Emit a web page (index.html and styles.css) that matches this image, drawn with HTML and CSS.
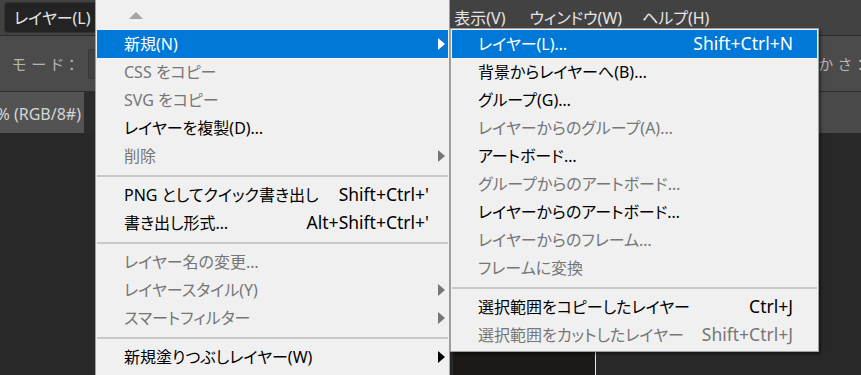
FILE: index.html
```html
<!DOCTYPE html>
<html lang="ja">
<head>
    <meta charset="UTF-8">
    <title>レイヤーメニュー</title>
    <link rel="stylesheet" href="styles.css">
</head>
<body>
<div class="app">
    <div class="menubar">
        <span class="mb-item active">レイヤー(L)</span>
        <span class="mb-item">書式(Y)</span>
        <span class="mb-item">選択範囲(S)</span>
        <span class="mb-item">フィルター(T)</span>
        <span class="mb-item">3D(D)</span>
        <span class="mb-item">表示(V)</span>
        <span class="mb-item">ウィンドウ(W)</span>
        <span class="mb-item">ヘルプ(H)</span>
    </div>
    <div class="optionsbar">
        <span class="opt-label">モード：</span>
        <div class="opt-select"></div>
        <span class="opt-label opt-right">滑らかさ：</span>
    </div>
    <div class="tabbar">
        <div class="doc-tab"><span>名称未設定-1 @ 66.7% (RGB/8#)</span></div>
    </div>
    <div class="canvas">
        <div class="photo"></div>
    </div>
</div>

<div class="menu main-menu">
    <div class="scroll-up"><span class="tri-up"></span></div>
    <div class="row hl"><span class="label">新規(N)</span><span class="key"></span><span class="arrow"></span></div>
    <div class="row off"><span class="label">CSS をコピー</span><span class="key"></span><span></span></div>
    <div class="row off"><span class="label">SVG をコピー</span><span class="key"></span><span></span></div>
    <div class="row"><span class="label">レイヤーを複製(D)…</span><span class="key"></span><span></span></div>
    <div class="row off"><span class="label">削除</span><span class="key"></span><span class="arrow"></span></div>
    <div class="sep"></div>
    <div class="row"><span class="label">PNG としてクイック書き出し</span><span class="key">Shift+Ctrl+'</span><span></span></div>
    <div class="row"><span class="label">書き出し形式…</span><span class="key">Alt+Shift+Ctrl+'</span><span></span></div>
    <div class="sep"></div>
    <div class="row off"><span class="label">レイヤー名の変更…</span><span class="key"></span><span></span></div>
    <div class="row off"><span class="label">レイヤースタイル(Y)</span><span class="key"></span><span class="arrow"></span></div>
    <div class="row off"><span class="label">スマートフィルター</span><span class="key"></span><span class="arrow"></span></div>
    <div class="sep"></div>
    <div class="row"><span class="label">新規塗りつぶしレイヤー(W)</span><span class="key"></span><span class="arrow"></span></div>
</div>

<div class="menu sub-menu">
    <div class="row hl"><span class="label">レイヤー(L)…</span><span class="key">Shift+Ctrl+N</span></div>
    <div class="row"><span class="label">背景からレイヤーへ(B)…</span><span class="key"></span></div>
    <div class="row"><span class="label">グループ(G)…</span><span class="key"></span></div>
    <div class="row off"><span class="label">レイヤーからのグループ(A)…</span><span class="key"></span></div>
    <div class="row"><span class="label">アートボード…</span><span class="key"></span></div>
    <div class="row off"><span class="label">グループからのアートボード…</span><span class="key"></span></div>
    <div class="row"><span class="label">レイヤーからのアートボード…</span><span class="key"></span></div>
    <div class="row off"><span class="label">レイヤーからのフレーム…</span><span class="key"></span></div>
    <div class="row off"><span class="label">フレームに変換</span><span class="key"></span></div>
    <div class="sep"></div>
    <div class="row"><span class="label">選択範囲をコピーしたレイヤー</span><span class="key">Ctrl+J</span></div>
    <div class="row off"><span class="label">選択範囲をカットしたレイヤー</span><span class="key">Shift+Ctrl+J</span></div>
</div>
</body>
</html>
```

FILE: styles.css
```css
* {
    margin: 0;
    padding: 0;
    box-sizing: border-box;
}
body {
    width: 861px;
    height: 375px;
    overflow: hidden;
    background: #282828;
    font-family: "Noto Sans", "Noto Sans CJK JP", sans-serif;
    font-feature-settings: "palt";
}
.app {
    display: flex;
    flex-direction: column;
    height: 375px;
}

/* top menu bar */
.menubar {
    height: 36px;
    background: #424242;
    border-bottom: 1px solid #2c2c2c;
    display: flex;
    align-items: center;
    padding-left: 4px;
    gap: 2px;
    color: #e6e6e6;
    font-size: 16px;
}
.mb-item {
    padding: 2px 9px 3px;
    border-radius: 4px;
    white-space: nowrap;
}
.mb-item.active {
    padding: 2px 7px 3px 9px;
    background: #232323;
    border: 1px solid #333;
}
.mb-item:nth-child(6) {
    margin-left: 1px;
}
.mb-item:nth-child(7) {
    margin-left: 4px;
}

/* options bar */
.optionsbar {
    height: 56px;
    background: #4b4b4b;
    border-bottom: 1px solid #2e2e2e;
    display: flex;
    align-items: center;
    padding-left: 12px;
    color: #b4b4b4;
    font-size: 15px;
    letter-spacing: 5px;
    white-space: nowrap;
}
.opt-select {
    width: 180px;
    height: 30px;
    margin-left: 8px;
    background: #424242;
    border: 1px solid #363636;
    border-radius: 3px;
}
.opt-right {
    margin-left: auto;
    margin-right: -8px;
    letter-spacing: 5px;
}

/* document tab bar */
.tabbar {
    height: 41px;
    background: #4a4a4a;
    display: flex;
}
.doc-tab {
    width: 84px;
    background: #535353;
    color: #d6d6d6;
    font-size: 16px;
    display: flex;
    align-items: center;
    justify-content: flex-end;
    overflow: hidden;
    white-space: nowrap;
    border-right: 11px solid #2b2b2b;
    box-sizing: content-box;
}
.doc-tab span {
    padding-right: 3px;
}

/* canvas */
.canvas {
    flex: 1;
    background: #282828;
    display: flex;
    padding-left: 453px;
}
.photo {
    width: 143px;
    background: #1c1917;
    border-right: 1px solid #e8e8e8;
}

/* menus */
.menu {
    position: absolute;
    background: #f0f0f0;
    border: 1px solid #a0a0a0;
    padding: 1px;
    font-size: 16px;
    color: #000;
}
.main-menu {
    left: 95px;
    top: -3px;
    width: 355px;
    height: 400px;
    padding-top: 2px;
}
.sub-menu {
    left: 450px;
    top: 28px;
    width: 369px;
    padding-bottom: 2px;
    box-shadow: 2px 2px 3px rgba(0, 0, 0, 0.45);
}
.scroll-up {
    height: 30px;
    padding-left: 32px;
    display: flex;
    align-items: center;
}
.tri-up {
    width: 0;
    height: 0;
    border-left: 7px solid transparent;
    border-right: 7px solid transparent;
    border-bottom: 7px solid #a4a4a4;
}
.row {
    height: 28px;
    padding-bottom: 3px;
    display: grid;
    align-items: center;
    white-space: nowrap;
}
.key {
    font-size: 17.5px;
}
.main-menu .row {
    grid-template-columns: 1fr auto 19px;
    padding-left: 27px;
}
.sub-menu .row {
    grid-template-columns: 1fr auto;
    padding-left: 26px;
    padding-right: 24px;
}
.row.off {
    color: #767676;
}
.row.hl {
    background: #0078d7;
    color: #fff;
}
.arrow {
    width: 0;
    height: 0;
    margin-left: 9px;
    margin-top: 3px;
    border-top: 6px solid transparent;
    border-bottom: 6px solid transparent;
    border-left: 7px solid #000;
}
.row.off .arrow {
    border-left-color: #767676;
}
.row.hl .arrow {
    border-left-color: #fff;
}
.sep {
    height: 11px;
    display: flex;
    align-items: center;
}
.sep::before {
    content: "";
    flex: 1;
    height: 2px;
    background: #c8c8c8;
}
```
